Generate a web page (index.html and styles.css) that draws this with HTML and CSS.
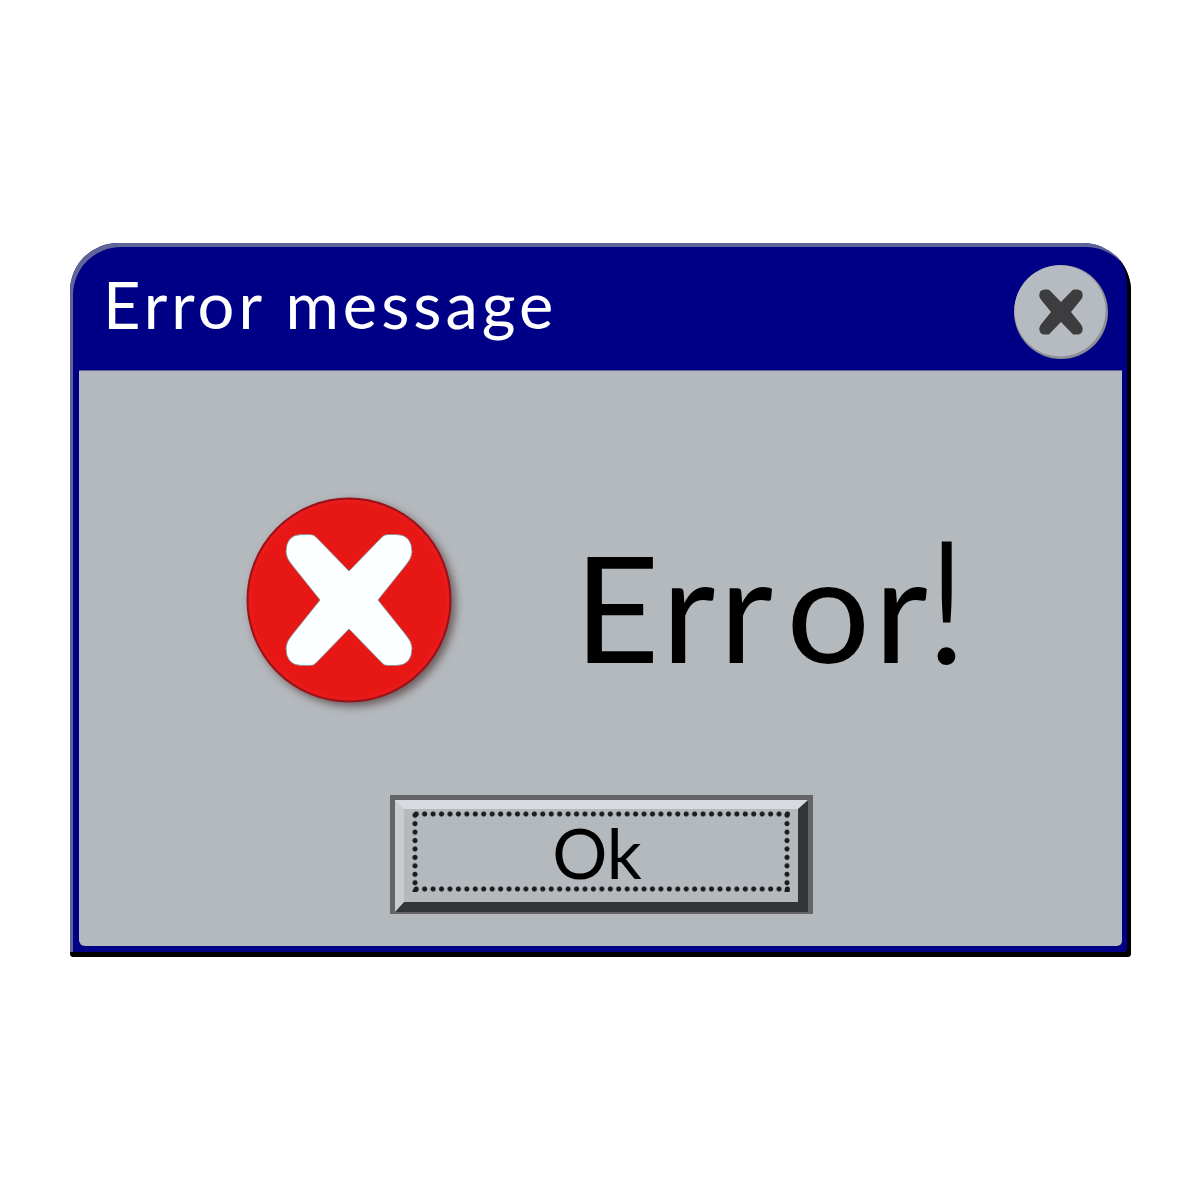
FILE: index.html
```html
<!DOCTYPE html>
<html lang="en">
<head>
<meta charset="utf-8">
<title>Error message</title>
<link rel="stylesheet" href="styles.css">
</head>
<body>
<div class="window">
  <header class="titlebar">
    <h1 class="title">Error message</h1>
    <div class="close">
      <svg class="close-icon" width="94" height="94" viewBox="-47 -47 94 94" aria-hidden="true">
        <circle class="close-rim" r="47"/>
        <circle class="close-face" cx="-1" cy="-1.2" r="45.6"/>
        <path class="close-x" transform="scale(.345)" d="M0-29L-33-63Q-35-65.500-39-65.500L-47-65.500Q-63-65.500-63-48Q-63-42-57-35L-29 0L-57 35Q-63 42-63 48Q-63 65.500-47 65.500L-39 65.500Q-35 65.500-33 63L0 29L33 63Q35 65.500 39 65.500L47 65.500Q63 65.500 63 48Q63 42 57 35L29 0L57-35Q63-42 63-48Q63-65.500 47-65.500L39-65.500Q35-65.500 33-63Z"/>
      </svg>
    </div>
  </header>
  <main class="panel">
    <div class="message">
      <svg class="error-icon" width="206" height="206" viewBox="-103 -103 206 206" aria-hidden="true">
        <circle class="error-disc" r="101.5"/>
        <circle class="error-glow" r="98.5"/>
        <path class="error-x" d="M0-29L-33-63Q-35-65.500-39-65.500L-47-65.500Q-63-65.500-63-48Q-63-42-57-35L-29 0L-57 35Q-63 42-63 48Q-63 65.500-47 65.500L-39 65.500Q-35 65.500-33 63L0 29L33 63Q35 65.500 39 65.500L47 65.500Q63 65.500 63 48Q63 42 57 35L29 0L57-35Q63-42 63-48Q63-65.500 47-65.500L39-65.500Q35-65.500 33-63Z"/>
      </svg>
      <p class="error-text">Er<span class="wide">r</span>o<span class="tight">r</span><span class="bang">!</span></p>
    </div>
    <div class="button">
      <div class="bevel">Ok</div>
    </div>
  </main>
</div>
</body>
</html>
```
FILE: styles.css
```css
* { box-sizing: border-box; }
html, body { margin: 0; height: 100%; }
body {
  background: #fff;
  font-family: Lato, "Open Sans", "Liberation Sans", sans-serif;
  height: 1200px;
  padding: 243px 69px 0 70px;
}
.window {
  width: 1061px;
  height: 714px;
  display: flex;
  flex-direction: column;
  background: #000086;
  border-radius: 48px 48px 4px 4px;
  box-shadow: inset -4px -5px 0 #000, inset 3px 4px 0 #5f6599;
  padding: 4px 9px 11px 9px;
}
.titlebar {
  height: 123px;
  flex: none;
  display: flex;
  align-items: flex-start;
  justify-content: space-between;
  padding: 18px 14px 0 24px;
}
.title {
  margin: -3px 0 0;
  color: #fff;
  font-size: 65px;
  font-weight: 400;
  line-height: 84px;
  letter-spacing: 4px;
  white-space: nowrap;
}
.close { width: 94px; height: 94px; flex: none; }
.close-icon, .error-icon { display: block; overflow: visible; }
.close-rim { fill: #8e8e95; }
.close-face { fill: #b6bac1; }
.close-x { fill: #3d3d3f; }
.panel {
  flex: 1;
  display: flex;
  flex-direction: column;
  align-items: center;
  background: #b4b9bd;
  border-top: 1px solid #5f6599;
  border-radius: 0 0 5px 6px;
  padding-top: 126px;
}
.message {
  align-self: stretch;
  height: 206px;
  display: flex;
  align-items: flex-start;
  padding-left: 167px;
}
.error-icon { flex: none; filter: drop-shadow(4px 4px 4px rgba(60, 30, 30, .6)); }
.error-disc { fill: #e71716; stroke: #99121a; stroke-width: 2; }
.error-glow { fill: none; stroke: #ee3a38; stroke-width: 3; opacity: .12; }
.error-x { fill: #fbffff; stroke: #7d8f8f; stroke-width: .8; }
.error-text {
  margin: 0 0 0 122px;
  padding-top: 6px;
  color: #000;
  font-size: 148px;
  font-weight: 400;
  line-height: 206px;
  letter-spacing: 4px;
  white-space: nowrap;
}
.wide { letter-spacing: 13px; }
.tight { letter-spacing: -3px; }
.bang {
  font-size: 170px;
  font-weight: 300;
  line-height: 0;
  -webkit-text-stroke: 2px #000;
}
.button {
  width: 423px;
  height: 119px;
  margin-top: 92px;
  margin-left: 1px;
  flex: none;
  padding: 5px 5px 2px;
  background: #656567;
}
.bevel {
  position: relative;
  width: 100%;
  height: 100%;
  background: #b4b9bd;
  background-clip: padding-box;
  border-style: solid;
  border-width: 9px 10px 10px 9px;
  border-color: #d7dbdf #343537 #343537 #c8ccd1;
  display: flex;
  align-items: center;
  justify-content: center;
  padding: 0 7px 7px 0;
  color: #000;
  font-size: 69px;
  line-height: 1;
}
.bevel::after {
  content: "";
  position: absolute;
  left: 8px;
  right: 8px;
  top: 2px;
  bottom: 10px;
  background-image:
    radial-gradient(circle 3px, #1c1c1e 70%, transparent 100%),
    radial-gradient(circle 3px, #1c1c1e 70%, transparent 100%),
    radial-gradient(circle 3px, #1c1c1e 70%, transparent 100%),
    radial-gradient(circle 3px, #1c1c1e 70%, transparent 100%);
  background-size: 8.45px 6px, 8.45px 6px, 6px 8.45px, 6px 8.45px;
  background-repeat: repeat-x, repeat-x, repeat-y, repeat-y;
  background-position: left top, left bottom, left top, right top;
}
```
